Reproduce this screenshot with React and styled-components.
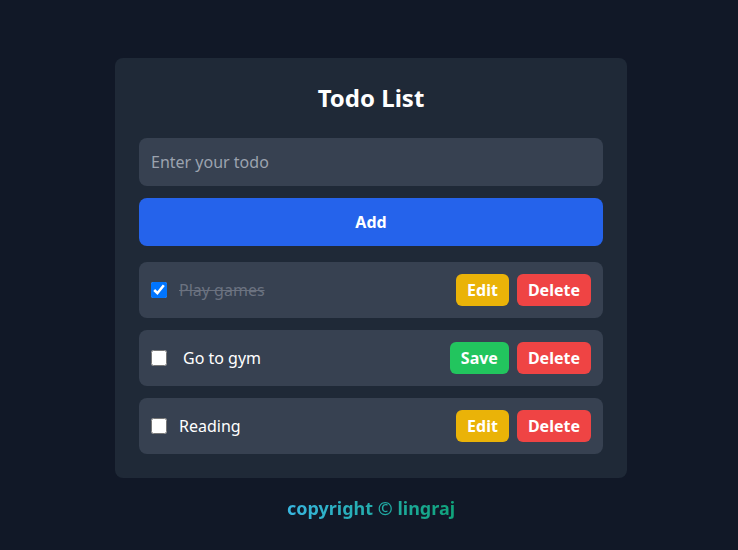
import { useState } from "react";
import styled, { createGlobalStyle } from "styled-components";

const GlobalStyle = createGlobalStyle`
    * {
        box-sizing: border-box;
    }

    body {
        margin: 0;
        background: #111827;
        font-family: "Noto Sans", "Open Sans", sans-serif;
    }
`

const initialTodos = [
    { id: 1, text: "Play games", done: true, editing: false },
    { id: 2, text: "Go to gym", done: false, editing: true },
    { id: 3, text: "Reading", done: false, editing: false },
];

function App() {

    const [todos, setTodos] = useState(initialTodos);
    const [value, setValue] = useState("");

    function toggle(id) {
        setTodos(todos.map((t) => t.id === id ? { ...t, done: !t.done } : t));
    }

    function toggleEdit(id) {
        setTodos(todos.map((t) => t.id === id ? { ...t, editing: !t.editing } : t));
    }

    function rename(id, text) {
        setTodos(todos.map((t) => t.id === id ? { ...t, text } : t));
    }

    function remove(id) {
        setTodos(todos.filter((t) => t.id !== id));
    }

    function add() {
        if (!value.trim()) return;
        setTodos([...todos, { id: Date.now(), text: value, done: false, editing: false }]);
        setValue("");
    }

    return (
        <Screen>
            <GlobalStyle />
            <Card>
                <Title>Todo List</Title>
                <TodoInput
                    placeholder="Enter your todo"
                    value={value}
                    onChange={(e) => setValue(e.target.value)}
                />
                <AddButton onClick={add}>Add</AddButton>

                <List>
                    {todos.map((todo) => (
                        <Row key={todo.id}>
                            <Left>
                                <Check
                                    type="checkbox"
                                    checked={todo.done}
                                    onChange={() => toggle(todo.id)}
                                />
                                {todo.editing ? (
                                    <EditInput
                                        value={todo.text}
                                        onChange={(e) => rename(todo.id, e.target.value)}
                                    />
                                ) : (
                                    <Text done={todo.done}>{todo.text}</Text>
                                )}
                            </Left>
                            <Actions>
                                <ActionButton
                                    color={todo.editing ? "#22c55e" : "#eab308"}
                                    onClick={() => toggleEdit(todo.id)}
                                >
                                    {todo.editing ? "Save" : "Edit"}
                                </ActionButton>
                                <ActionButton color="#ef4444" onClick={() => remove(todo.id)}>
                                    Delete
                                </ActionButton>
                            </Actions>
                        </Row>
                    ))}
                </List>
            </Card>
            <Footer>copyright © lingraj</Footer>
        </Screen>
    )
}

export default App;

const Screen = styled.div`
    min-height: 100vh;
    padding: 58px 0 0 4px;

    display: flex;
    flex-direction: column;
    align-items: center;
`

const Card = styled.div`
    width: 512px;
    padding: 24px;
    background: #1f2937;
    border-radius: 8px;

    display: flex;
    flex-direction: column;
`

const Title = styled.h1`
    margin: 0 0 24px;
    font-size: 24px;
    line-height: 32px;
    font-weight: 700;
    color: #ffffff;
    text-align: center;
`

const TodoInput = styled.input`
    height: 48px;
    padding: 0 12px;
    border: none;
    border-radius: 8px;
    background: #374151;
    color: #ffffff;
    font-family: inherit;
    font-size: 16px;
    outline: none;

    &::placeholder {
        color: #9ca3af;
    }
`

const AddButton = styled.button`
    height: 48px;
    margin-top: 12px;
    border: none;
    border-radius: 8px;
    background: #2563eb;
    color: #ffffff;
    font-family: inherit;
    font-size: 16px;
    font-weight: 700;
    cursor: pointer;
`

const List = styled.ul`
    list-style: none;
    margin: 16px 0 0;
    padding: 0;

    display: flex;
    flex-direction: column;
    gap: 12px;
`

const Row = styled.li`
    height: 56px;
    padding: 0 12px;
    background: #374151;
    border-radius: 8px;

    display: flex;
    align-items: center;
    justify-content: space-between;
`

const Left = styled.div`
    display: flex;
    align-items: center;
    gap: 12px;
`

const Check = styled.input`
    width: 16px;
    height: 16px;
    margin: 0;
`

const Text = styled.span`
    font-size: 16px;
    color: ${(p) => p.done ? "#6b7280" : "#ffffff"};
    text-decoration: ${(p) => p.done ? "line-through" : "none"};
`

const EditInput = styled.input`
    width: 200px;
    padding: 0 4px;
    border: none;
    background: transparent;
    color: #ffffff;
    font-family: inherit;
    font-size: 16px;
    outline: none;
`

const Actions = styled.div`
    display: flex;
    gap: 8px;
`

const ActionButton = styled.button`
    height: 32px;
    padding: 0 11px;
    border: none;
    border-radius: 6px;
    background: ${(p) => p.color};
    color: #ffffff;
    font-family: inherit;
    font-size: 16px;
    font-weight: 700;
    cursor: pointer;
`

const Footer = styled.p`
    margin: 16px 0 0;
    font-size: 18px;
    line-height: 28px;
    font-weight: 700;
    background: linear-gradient(to right, #38b6e0, #10a37a);
    -webkit-background-clip: text;
    background-clip: text;
    color: transparent;
`
